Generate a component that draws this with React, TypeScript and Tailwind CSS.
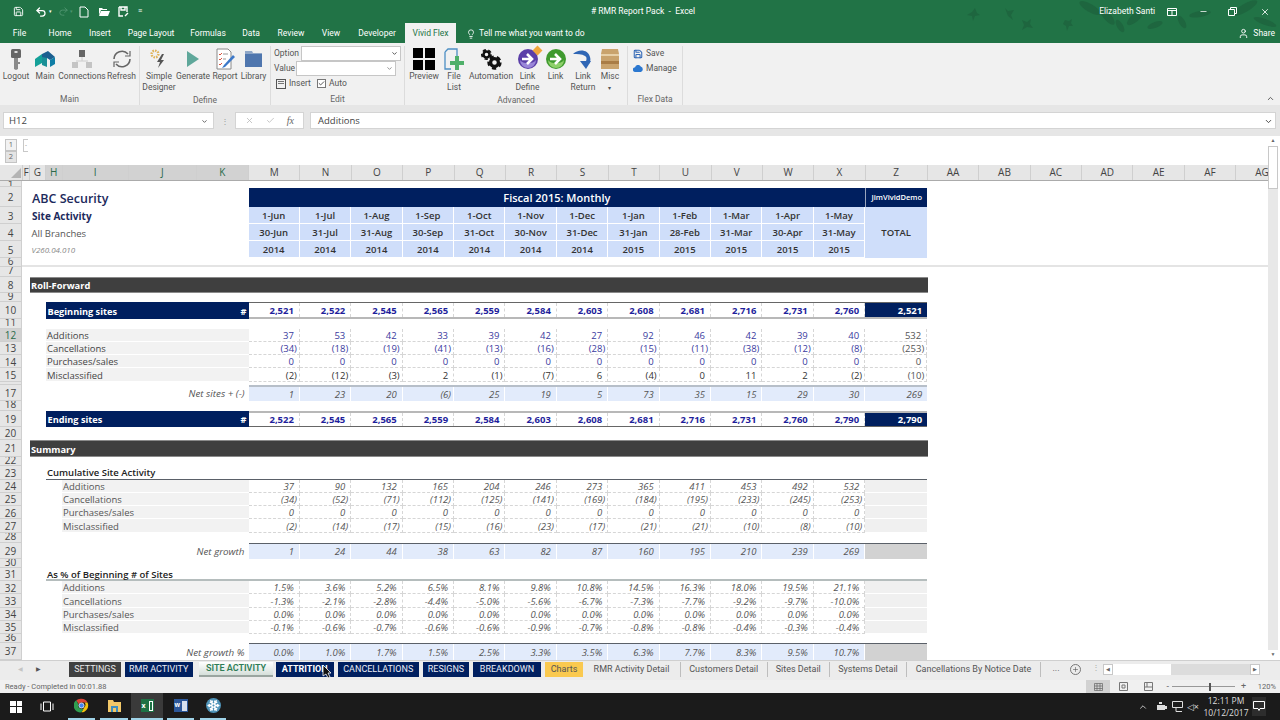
import { clsx } from "clsx"
import type { ReactNode } from "react"
import {
  ChevronDown,
  ChevronUp,
  Lightbulb,
  Minus,
  Plus,
  Redo2,
  Save,
  Snowflake,
  Undo2,
  User,
  X,
  Check,
} from "lucide-react"

const start = ["1-Jun", "1-Jul", "1-Aug", "1-Sep", "1-Oct", "1-Nov", "1-Dec", "1-Jan", "1-Feb", "1-Mar", "1-Apr", "1-May"]
const end = ["30-Jun", "31-Jul", "31-Aug", "30-Sep", "31-Oct", "30-Nov", "31-Dec", "31-Jan", "28-Feb", "31-Mar", "30-Apr", "31-May"]
const years = ["2014", "2014", "2014", "2014", "2014", "2014", "2014", "2015", "2015", "2015", "2015", "2015"]
const zeros = Array(12).fill("0")
const zeroPct = Array(12).fill("0.0%")
const colLetters = ["M", "N", "O", "P", "Q", "R", "S", "T", "U", "V", "W", "X"]

function GroupLabel({ children }: { children: ReactNode }) {
  return <div className="h-[13px] pt-[1px] text-center text-[8.5px] leading-[13px] text-[#666]">{children}</div>
}

function Btn({ w, icon, label }: { w: string; icon: ReactNode; label: ReactNode }) {
  return (
    <div className={clsx("flex shrink-0 flex-col items-center", w)}>
      <div className="flex h-[25px] items-center justify-center">{icon}</div>
      <div className="whitespace-nowrap text-center text-[8.5px] leading-[11px] text-[#555]">{label}</div>
    </div>
  )
}

function Sphere({ from, to }: { from: string; to: string }) {
  return (
    <svg width="22" height="22" viewBox="0 0 22 22">
      <circle cx="11" cy="11" r="10" fill={from} />
      <path d="M3 12a8 8 0 0 0 16 0a9 6 0 0 1-16 0z" fill={to} />
      <path d="M5 11h8M10 6l5 5-5 5" fill="none" stroke="#fff" strokeWidth="2.6" />
    </svg>
  )
}

function Gear({ cx, cy, r }: { cx: number; cy: number; r: number }) {
  return (
    <g fill="none" stroke="#111">
      <circle cx={cx} cy={cy} r={r * 0.6} strokeWidth={r * 0.5} />
      <circle cx={cx} cy={cy} r={r * 0.92} strokeWidth={r * 0.36} strokeDasharray={`${r * 0.65} ${r * 0.5}`} />
    </g>
  )
}

function Ribbon() {
  return (
    <div className="flex h-[62px] shrink-0 bg-[#f1f1f1] pt-[3px] font-['Roboto',sans-serif]">
      <div className="flex w-[140px] flex-col border-r border-[#dcdcdc]">
        <div className="flex flex-1 pl-[1px]">
          <Btn
            w="w-[30px]"
            label="Logout"
            icon={
              <svg width="14" height="22" viewBox="0 0 14 22">
                <rect x="2" y="1" width="10" height="9" rx="1.5" fill="#666" />
                <rect x="5.5" y="3" width="3" height="2" fill="#ddd" />
                <path d="M5 10h4v11l-2 1-2-1z" fill="#8a8a8a" />
                <path d="M9 14h2v2H9z" fill="#8a8a8a" />
              </svg>
            }
          />
          <Btn
            w="w-[28px]"
            label="Main"
            icon={
              <svg width="22" height="18" viewBox="0 0 22 18">
                <path d="M1 9l7-5v9l-7 4z" fill="#14a098" />
                <path d="M8 4l6-3 7 6-5 3-3-2-5 3z" fill="#1b5f8f" />
                <path d="M8 7l5 1v9l-5-2z" fill="#1a8f96" />
                <path d="M16 10l5-3v7l-5 3z" fill="#0f7ea6" />
              </svg>
            }
          />
          <Btn
            w="w-[46px]"
            label="Connections"
            icon={
              <svg width="22" height="20" viewBox="0 0 22 20">
                <rect x="8" y="1" width="6" height="7" fill="#666" />
                <path d="M11 8v4M5 12h12" stroke="#ccc" />
                <rect x="1" y="13" width="6" height="6" fill="#c4c4c4" />
                <rect x="15" y="13" width="6" height="6" fill="#c4c4c4" />
              </svg>
            }
          />
          <Btn
            w="w-[33px]"
            label="Refresh"
            icon={
              <svg width="22" height="20" viewBox="0 0 22 20" fill="none" stroke="#666" strokeWidth="1.6">
                <path d="M3 10a8 8 0 0 1 14-5" />
                <path d="M19 10a8 8 0 0 1-14 5" />
                <path d="M19 2v5h-5M3 18v-5h5" strokeWidth="1.2" />
              </svg>
            }
          />
        </div>
        <GroupLabel>Main</GroupLabel>
      </div>
      <div className="flex w-[131px] flex-col border-r border-[#dcdcdc]">
        <div className="flex flex-1 pl-[2px]">
          <Btn
            w="w-[34px]"
            label={
              <>
                Simple
                <br />
                Designer
              </>
            }
            icon={
              <svg width="20" height="20" viewBox="0 0 20 20">
                <circle cx="6" cy="5" r="3.4" fill="none" stroke="#e0b45c" strokeWidth="2.4" strokeDasharray="1.6 1" />
                <path d="M13 5l-5 8h3l-2 6 6-8h-3l3-6z" fill="#555" />
              </svg>
            }
          />
          <Btn
            w="w-[34px]"
            label="Generate"
            icon={
              <svg width="14" height="18" viewBox="0 0 14 18">
                <path d="M1 1l12 8-12 8z" fill="#5fa79a" />
              </svg>
            }
          />
          <Btn
            w="w-[30px]"
            label="Report"
            icon={
              <svg width="20" height="22" viewBox="0 0 20 22">
                <path d="M2 1h11l3 3v17H2z" fill="#fff" stroke="#8a8a8a" />
                <path d="M4 6l1 1 2-2M4 11l1 1 2-2M4 16l1 1 2-2" fill="none" stroke="#d9533f" />
                <path d="M8 6h5M8 11h3" stroke="#999" />
                <path d="M18 7l-9 10-2 3 3-1 10-10z" fill="#3c78c8" />
              </svg>
            }
          />
          <Btn
            w="w-[27px]"
            label="Library"
            icon={
              <svg width="19" height="18" viewBox="0 0 19 18">
                <path d="M1 1h7l1 2h9v14H1z" fill="#8fa7c8" />
                <rect x="1" y="4" width="17" height="13" fill="#4f76ae" />
              </svg>
            }
          />
        </div>
        <GroupLabel>Define</GroupLabel>
      </div>
      <div className="flex w-[134px] flex-col border-r border-[#dcdcdc]">
        <div className="flex-1 pl-[3px] text-[8.5px] text-[#555]">
          <div className="flex h-[15px] items-center">
            <span className="w-[27px]">Option</span>
            <div className="flex h-[15px] w-[100px] items-center justify-end border border-[#c6c6c6] bg-white pr-[2px]">
              <ChevronDown className="size-[7px] text-[#444]" strokeWidth={3} />
            </div>
          </div>
          <div className="flex h-[15px] items-center">
            <span className="w-[22px]">Value</span>
            <div className="flex h-[15px] w-[100px] items-center justify-end border border-[#c6c6c6] bg-white pr-[2px]">
              <ChevronDown className="size-[7px] text-[#888]" strokeWidth={3} />
            </div>
          </div>
          <div className="flex h-[15px] items-center pl-[2px]">
            <div className="flex size-[10px] flex-col gap-[1px] border border-[#555] p-[1px]">
              <div className="h-[1px] bg-[#777]" />
              <div className="h-[1px] bg-[#777]" />
            </div>
            <span className="ml-[3px] w-[28px]">Insert</span>
            <div className="flex size-[9px] items-center justify-center border border-[#777] bg-white">
              <Check className="size-[7px] text-[#444]" strokeWidth={3} />
            </div>
            <span className="ml-[3px]">Auto</span>
          </div>
        </div>
        <GroupLabel>Edit</GroupLabel>
      </div>
      <div className="flex w-[223px] flex-col border-r border-[#dcdcdc]">
        <div className="flex flex-1 pl-[4px]">
          <Btn
            w="w-[30px]"
            label="Preview"
            icon={
              <div className="grid grid-cols-2 gap-[2px]">
                <div className="size-[10px] bg-black" />
                <div className="size-[10px] bg-black" />
                <div className="size-[10px] bg-black" />
                <div className="size-[10px] bg-black" />
              </div>
            }
          />
          <Btn
            w="w-[30px]"
            label={
              <>
                File
                <br />
                List
              </>
            }
            icon={
              <svg width="22" height="22" viewBox="0 0 22 22">
                <path d="M2 4l3-3h9v8M8 21H2V4" fill="none" stroke="#4d8fc4" strokeWidth="1.3" />
                <path d="M12 8h4v5h5v4h-5v5h-4v-5H7v-4h5z" fill="#4fb06a" />
              </svg>
            }
          />
          <Btn
            w="w-[44px]"
            label="Automation"
            icon={
              <svg width="22" height="22" viewBox="0 0 22 22">
                <Gear cx={6.5} cy={6.5} r={5} />
                <Gear cx={14.5} cy={14.5} r={6.5} />
              </svg>
            }
          />
          <Btn
            w="w-[29px]"
            label={
              <>
                Link
                <br />
                Define
              </>
            }
            icon={
              <div className="relative">
                <Sphere from="#5b3fa8" to="#9a87d8" />
                <div className="absolute -right-[2px] -top-[1px] size-[7px] rotate-45 bg-[#f0a63c]" />
              </div>
            }
          />
          <Btn w="w-[27px]" label="Link" icon={<Sphere from="#3f9a2f" to="#8ed06a" />} />
          <Btn
            w="w-[28px]"
            label={
              <>
                Link
                <br />
                Return
              </>
            }
            icon={
              <svg width="22" height="22" viewBox="0 0 22 22">
                <path d="M1 6c5-5 15-5 17 3 1 3 0 5-1 7l-4-1c2-3 2-6 0-7-3-2-8-2-12-2z" fill="#2f66b5" />
                <path d="M8 13h11l-5 8z" fill="#2f66b5" />
              </svg>
            }
          />
          <Btn
            w="w-[26px]"
            label={
              <>
                Misc
                <br />
                <span className="text-[6px]">▾</span>
              </>
            }
            icon={
              <svg width="20" height="22" viewBox="0 0 20 22">
                <path d="M2 1h16l1 5v15H1V6z" fill="#c9a36d" />
                <rect x="1" y="6" width="18" height="2" fill="#e7d0a8" />
                <rect x="1" y="13" width="18" height="3" fill="#a97c45" />
              </svg>
            }
          />
        </div>
        <GroupLabel>Advanced</GroupLabel>
      </div>
      <div className="flex w-[55px] flex-col border-r border-[#dcdcdc]">
        <div className="flex-1 pl-[5px] text-[8.5px] text-[#555]">
          <div className="flex h-[15px] items-center gap-[3px]">
            <Save className="size-[10px] text-[#2f66b5]" strokeWidth={2.5} />
            <span>Save</span>
          </div>
          <div className="flex h-[15px] items-center gap-[3px]">
            <svg width="10" height="7" viewBox="0 0 10 7">
              <path d="M2.5 7a2.4 2.4 0 0 1-.4-4.8 3 3 0 0 1 5.6-.6A2.8 2.8 0 0 1 7.8 7z" fill="#2b78d0" />
            </svg>
            <span>Manage</span>
          </div>
        </div>
        <GroupLabel>Flex Data</GroupLabel>
      </div>
      <div className="flex flex-1 items-end justify-end pb-[2px] pr-[5px]">
        <ChevronUp className="size-[9px] text-[#555]" strokeWidth={2.5} />
      </div>
    </div>
  )
}

function TitleBar() {
  const tabs = [
    { t: "File", w: "w-[39px]" },
    { t: "Home", w: "w-[42px]" },
    { t: "Insert", w: "w-[38px]" },
    { t: "Page Layout", w: "w-[64px]" },
    { t: "Formulas", w: "w-[50px]" },
    { t: "Data", w: "w-[36px]" },
    { t: "Review", w: "w-[44px]" },
    { t: "View", w: "w-[36px]" },
    { t: "Developer", w: "w-[56px]" },
  ]
  return (
    <div className="relative h-[43px] shrink-0 bg-[#217346] font-['Roboto',sans-serif] text-white">
      <svg className="absolute right-0 top-0" width="320" height="43" viewBox="0 0 320 43" fill="#1e663f">
        <path d="M7 15l5-3 3-4 2 5 3 2-5 1-2 5-1-5z" />
        <path d="M45 8l3 3 6-1-3 5 2 5-5-4-3-8zM62 20l5 2 4-3-1 5 3 4-6-1-5 3 2-5z" />
        <path d="M105 20l4 1 3-2-1 4 2 3-4 0-2 5-1-5-3-2z" />
        <ellipse cx="130" cy="8" rx="12" ry="4" transform="rotate(30 130 8)" />
        <ellipse cx="147" cy="16" rx="11" ry="4" transform="rotate(50 147 16)" />
        <ellipse cx="175" cy="18" rx="10" ry="4" transform="rotate(-40 175 18)" />
        <ellipse cx="195" cy="25" rx="8" ry="3" transform="rotate(-20 195 25)" />
        <ellipse cx="160" cy="26" rx="7" ry="3" transform="rotate(60 160 26)" />
        <ellipse cx="240" cy="14" rx="11" ry="3" transform="rotate(-10 240 14)" />
        <ellipse cx="285" cy="8" rx="14" ry="4" transform="rotate(-30 285 8)" />
        <ellipse cx="305" cy="22" rx="12" ry="3" transform="rotate(20 305 22)" />
        <ellipse cx="222" cy="22" rx="7" ry="3" transform="rotate(60 222 22)" />
      </svg>
      <div className="relative flex h-[21px] items-center pt-[2px]">
        <div className="flex w-[591px] items-center pl-[13px]">
          <Save className="size-[11px]" />
          <Undo2 className="ml-[11px] size-[12px]" strokeWidth={2.5} />
          <span className="ml-[2px] text-[5px]">▾</span>
          <Redo2 className="ml-[6px] size-[11px] text-[#4f9570]" />
          <span className="ml-[1px] text-[5px] text-[#4f9570]">▾</span>
          <svg className="ml-[6px]" width="10" height="12" viewBox="0 0 10 12" fill="none" stroke="#fff">
            <path d="M1 1h5l3 3v7H1z" />
          </svg>
          <svg className="ml-[9px]" width="12" height="11" viewBox="0 0 12 11" fill="#fff">
            <path d="M1 2h3l1 1h4v1H3L1 9zM3 5h9l-2 5H1z" />
          </svg>
          <svg className="ml-[8px]" width="11" height="11" viewBox="0 0 11 11" fill="none" stroke="#fff">
            <path d="M1 1h8v5M1 1v9h4M3 1v3h4V1M7 10l3-3" strokeWidth="1.4" />
          </svg>
          <span className="ml-[9px] text-[7px] leading-none">≡</span>
        </div>
        <span className="whitespace-nowrap text-[8.5px]"># RMR Report Pack&nbsp; -&nbsp; Excel</span>
        <div className="flex flex-1 items-center justify-end">
          <span className="mr-[12px] whitespace-nowrap text-[8.5px]">Elizabeth Santi</span>
          <svg width="10" height="8" viewBox="0 0 10 8" fill="none" stroke="#fff">
            <path d="M.5.5h9v7h-9zM.5 2.5h9M5 3v4" />
          </svg>
          <Minus className="ml-[22px] size-[9px]" />
          <svg className="ml-[20px]" width="9" height="9" viewBox="0 0 9 9" fill="none" stroke="#fff">
            <path d="M.5 2.5h6v6h-6zM2.5 2.5v-2h6v6h-2" />
          </svg>
          <X className="ml-[23px] mr-[10px] size-[10px]" />
        </div>
      </div>
      <div className="relative flex h-[22px] items-center pt-[3px] text-[8.5px]">
        {tabs.map((tab) => (
          <div key={tab.t} className={clsx("text-center", tab.w)}>
            {tab.t}
          </div>
        ))}
        <div className="flex h-[20px] w-[51px] items-center justify-center self-end bg-[#f1f1f1] text-[#217346]">Vivid Flex</div>
        <Lightbulb className="ml-[10px] size-[10px]" />
        <span className="ml-[3px]">Tell me what you want to do</span>
        <div className="flex flex-1 items-center justify-end gap-[4px] pr-[5px]">
          <User className="size-[11px]" />
          <span>Share</span>
        </div>
      </div>
    </div>
  )
}

function FormulaBar() {
  return (
    <div className="flex h-[31px] shrink-0 items-start bg-[#e6e6e6] pt-[7px] text-[9.5px] text-[#444]">
      <div className="ml-[3px] flex h-[17px] w-[211px] items-center justify-between border border-[#d4d4d4] bg-white px-[5px] pt-[1px]">
        <span>H12</span>
        <ChevronDown className="size-[7px] text-[#555]" strokeWidth={3} />
      </div>
      <span className="flex h-[17px] w-[21px] items-center justify-center text-[8px] text-[#999]">⋮</span>
      <div className="flex h-[17px] w-[69px] items-center justify-around border border-[#d4d4d4] bg-white px-[3px] text-[#b5b5b5]">
        <X className="size-[9px]" />
        <Check className="size-[9px]" />
        <span className="font-['Liberation_Serif',serif] text-[10px] italic text-[#666]">fx</span>
      </div>
      <div className="ml-[6px] flex h-[17px] flex-1 items-center justify-between border border-[#d4d4d4] bg-white pl-[7px] pr-[2px] pt-[1px]">
        <span>Additions</span>
        <ChevronDown className="size-[9px] text-[#444]" strokeWidth={2.5} />
      </div>
      <div className="w-[4px]" />
    </div>
  )
}

function OutlineStrip() {
  return (
    <div className="flex h-[29px] shrink-0 bg-white pl-[5px] pt-[3px] text-[#666]">
      <div className="flex w-[18px] flex-col text-[7.5px]">
        <div className="flex h-[12px] w-[12px] items-center justify-center border border-[#c4c4c4] bg-[#f2f2f2]">1</div>
        <div className="flex h-[12px] w-[12px] items-center justify-center border border-[#c4c4c4] bg-[#e4e4e4]">2</div>
      </div>
      <div className="flex h-[13px] w-[5px] items-center justify-center border-y border-l border-[#c8c8c8] text-[6px]">-</div>
    </div>
  )
}

function ColHeaders() {
  const cols = [
    { t: "F", w: "w-[7px]" },
    { t: "G", w: "w-[16px]" },
    { t: "H", w: "w-[16.5px]", on: true },
    { t: "I", w: "w-[66.5px]", on: true },
    { t: "J", w: "w-[67.5px]", on: true },
    { t: "K", w: "w-[52.5px]", on: true },
  ]
  const right = [
    { t: "AA", w: "w-[51.6px]" },
    { t: "AB", w: "w-[51.4px]" },
    { t: "AC", w: "w-[51.4px]" },
    { t: "AD", w: "w-[51.4px]" },
    { t: "AE", w: "w-[51.4px]" },
    { t: "AF", w: "w-[51.4px]" },
  ]
  const plain = "flex shrink-0 items-center justify-center border-r border-[#cfcfcf]"
  return (
    <div className="flex h-[16px] shrink-0 border-b border-[#ababab] bg-[#e6e6e6] text-[10px] text-[#444]">
      <div className="flex w-[23px] shrink-0 items-end justify-end border-r border-[#cfcfcf] pb-[2px] pr-[1px]">
        <svg width="10" height="10" viewBox="0 0 10 10">
          <path d="M10 0v10H0z" fill="#b4b4b4" />
        </svg>
      </div>
      {cols.map((c) => (
        <div key={c.t} className={clsx(plain, c.w, c.on && "bg-[#d2d2d2] text-[#2a6b4a]")}>
          {c.t}
        </div>
      ))}
      {colLetters.map((c) => (
        <div key={c} className={clsx(plain, "w-[51.4px]")}>
          {c}
        </div>
      ))}
      <div className={clsx(plain, "w-[62px]")}>Z</div>
      {right.map((c) => (
        <div key={c.t} className={clsx(plain, c.w)}>
          {c.t}
        </div>
      ))}
      <div className="flex flex-1 items-center overflow-hidden pl-[19px]">AG</div>
    </div>
  )
}

function Row({ n, h, tiny, on, children }: { n?: number; h: string; tiny?: boolean; on?: boolean; children?: ReactNode }) {
  return (
    <div className={clsx("flex shrink-0", h)}>
      <div
        className={clsx(
          "flex w-[22px] shrink-0 justify-center overflow-hidden border-b border-r border-[#cfcfcf] text-[10px] leading-[13px]",
          tiny ? "items-start" : "items-center pt-[2px]",
          on ? "bg-[#d2d2d2] text-[#2a6b4a]" : "bg-[#e6e6e6] text-[#444]",
        )}
      >
        <span className={clsx(tiny && "-mt-[3px]")}>{n}</span>
      </div>
      <div className="flex min-w-0 flex-1">{children}</div>
    </div>
  )
}

function valPad(v: string) {
  if (v.endsWith(")")) return "pr-[2px]"
  return "pr-[5px]"
}

function Months({
  vals,
  total,
  wrap,
  cell,
  totalCell,
}: {
  vals: string[]
  total?: string
  wrap?: string
  cell?: string
  totalCell?: string
}) {
  return (
    <div className={clsx("flex w-[678.8px] shrink-0 leading-none", wrap)}>
      {vals.map((v, i) => (
        <div key={i} className={clsx("flex w-[51.4px] shrink-0 items-center justify-end", valPad(v), cell)}>
          {v}
        </div>
      ))}
      <div className={clsx("flex w-[62px] shrink-0 items-center justify-end", valPad(total ?? ""), totalCell)}>{total}</div>
    </div>
  )
}

const dashed = "border-r border-b border-dashed border-[#d6d6d6]"

function LineRow({ n, h, on, label, vals, total, blue }: { n: number; h: string; on?: boolean; label: string; vals: string[]; total: string; blue?: boolean }) {
  return (
    <Row n={n} h={h} on={on}>
      <div className="ml-[23.5px] flex w-[203px] shrink-0 items-center border-b border-white bg-[#f2f2f2] pl-[1.5px] pt-[2px] text-[9.5px] leading-none text-[#444]">{label}</div>
      <Months
        vals={vals}
        total={total}
        wrap="text-[9.5px]"
        cell={clsx(dashed, "pt-[2px]", blue ? "text-[#3a3a9e]" : "text-[#333]")}
        totalCell={clsx(dashed, "pt-[2px] text-[#555]")}
      />
    </Row>
  )
}

function SummaryRow({ n, label, vals }: { n: number; label: string; vals: string[] }) {
  return (
    <Row n={n} h="h-[13.25px]">
      <div className="ml-[40px] flex w-[186.5px] shrink-0 items-center border-b border-white bg-[#f2f2f2] pl-[1px] pt-[2px] text-[9.5px] leading-none text-[#555]">{label}</div>
      <Months vals={vals} wrap="text-[9.5px] italic text-[#555]" cell={clsx(dashed, "pt-[2px]")} totalCell="bg-[#f0f0f0] border-b border-white" />
    </Row>
  )
}

function NetRow({ n, h, label, vals, total, wrap, totalCell }: { n: number; h: string; label: string; vals: string[]; total?: string; wrap: string; totalCell: string }) {
  return (
    <Row n={n} h={h}>
      <div className="flex w-[226.5px] shrink-0 items-center justify-end pr-[4px] pt-[3px] text-[9.8px] italic leading-none text-[#555]">{label}</div>
      <Months vals={vals} total={total} wrap={clsx("text-[9.5px] italic text-[#555]", wrap)} cell="bg-[#e2ebfb] border-r border-white pt-[2px]" totalCell={totalCell} />
    </Row>
  )
}

function BandRow({ n, h, label }: { n: number; h: string; label: string }) {
  return (
    <Row n={n} h={h}>
      <div className="ml-[8px] flex w-[897.5px] items-center border-y border-[#8a8a8a] bg-[#3f3f3f] pl-[1px] pt-[3px] text-[9.3px] font-bold leading-none text-white">{label}</div>
    </Row>
  )
}

function SitesRow({ n, h, label, vals, total, wrap }: { n: number; h: string; label: string; vals: string[]; total: string; wrap: string }) {
  return (
    <Row n={n} h={h}>
      <div className="ml-[23.5px] flex w-[203px] shrink-0 items-center justify-between bg-[#001f5f] px-[2px] pt-[3px] text-[9.2px] font-bold leading-none text-white">
        <span>{label}</span>
        <span>#</span>
      </div>
      <Months
        vals={vals}
        total={total}
        wrap={clsx("text-[9.5px] font-bold text-[#1f1f9c]", wrap)}
        cell="border-r border-dashed border-[#d6d6d6] pt-[2px]"
        totalCell="bg-[#001f5f] text-white pt-[2px]"
      />
    </Row>
  )
}

function HeaderCells({ n, vals, total }: { n: number; vals: string[]; total?: string }) {
  return (
    <div className="flex w-[678.8px] shrink-0 text-[9.5px] font-semibold leading-none text-[#333]">
      {vals.map((v, i) => (
        <div key={n + "-" + i} className="flex w-[51.4px] shrink-0 items-center justify-center border-b border-r border-white bg-[#cfdefa] pt-[2px]">
          {v}
        </div>
      ))}
      <div className="flex w-[62px] shrink-0 items-center justify-center bg-[#cfdefa] pt-[1px]">{total}</div>
    </div>
  )
}

function Sheet() {
  return (
    <div className="flex min-h-0 min-w-0 flex-1 flex-col overflow-hidden bg-white">
      <ColHeaders />
      <Row n={1} h="h-[6px]" tiny />
      <Row n={2} h="h-[20px]">
        <div className="flex w-[226.5px] shrink-0 items-center pl-[10px] pt-[4px] text-[12.5px] font-semibold leading-none text-[#1c2a5c]">ABC Security</div>
        <div className="mt-[1px] flex w-[616.8px] shrink-0 items-center justify-center bg-[#001f5f] text-[11px] font-semibold leading-none text-white">Fiscal 2015: Monthly</div>
        <div className="mt-[1px] flex w-[62px] shrink-0 items-center justify-center border-l border-[#9aa5bd] bg-[#001f5f] text-[7.5px] font-semibold leading-none text-white">JimVividDemo</div>
      </Row>
      <Row n={3} h="h-[17px]">
        <div className="flex w-[226.5px] shrink-0 items-center pl-[10px] text-[10px] font-bold leading-none text-[#1c2a5c]">Site Activity</div>
        <HeaderCells n={3} vals={start} />
      </Row>
      <Row n={4} h="h-[17px]">
        <div className="flex w-[226.5px] shrink-0 items-center pl-[9.5px] pt-[2px] text-[9.5px] leading-none text-[#555]">All Branches</div>
        <HeaderCells n={4} vals={end} total="TOTAL" />
      </Row>
      <Row n={5} h="h-[17px]">
        <div className="flex w-[226.5px] shrink-0 items-center pl-[9.5px] text-[8px] italic leading-none text-[#888]">V260.04.010</div>
        <HeaderCells n={5} vals={years} />
      </Row>
      <Row n={6} h="h-[8.5px]" tiny>
        <div className="flex-1 border-b-2 border-[#e4e4e4]" />
      </Row>
      <Row n={7} h="h-[10px]" tiny />
      <BandRow n={8} h="h-[16px]" label="Roll-Forward" />
      <Row n={9} h="h-[9px]" tiny />
      <SitesRow
        n={10}
        h="h-[17px]"
        label="Beginning sites"
        vals={["2,521", "2,522", "2,545", "2,565", "2,559", "2,584", "2,603", "2,608", "2,681", "2,716", "2,731", "2,760"]}
        total="2,521"
        wrap="border-t border-[#666] border-b-2 border-b-[#b8b8b8]"
      />
      <Row n={11} h="h-[10px]" tiny />
      <LineRow n={12} h="h-[13.25px]" on label="Additions" blue vals={["37", "53", "42", "33", "39", "42", "27", "92", "46", "42", "39", "40"]} total="532" />
      <LineRow n={13} h="h-[13.25px]" label="Cancellations" blue vals={["(34)", "(18)", "(19)", "(41)", "(13)", "(16)", "(28)", "(15)", "(11)", "(38)", "(12)", "(8)"]} total="(253)" />
      <LineRow n={14} h="h-[13.25px]" label="Purchases/sales" blue vals={zeros} total="0" />
      <LineRow n={15} h="h-[13.25px]" label="Misclassified" vals={["(2)", "(12)", "(3)", "2", "(1)", "(7)", "6", "(4)", "0", "11", "2", "(2)"]} total="(10)" />
      <Row h="h-[3px]" tiny />
      <NetRow
        n={17}
        h="h-[16px]"
        label="Net sites + (-)"
        vals={["1", "23", "20", "(6)", "25", "19", "5", "73", "35", "15", "29", "30"]}
        total="269"
        wrap="border-t-2 border-[#b7bfc9]"
        totalCell="bg-[#e2ebfb] pt-[2px]"
      />
      <Row n={18} h="h-[10px]" tiny />
      <SitesRow
        n={19}
        h="h-[16px]"
        label="Ending sites"
        vals={["2,522", "2,545", "2,565", "2,559", "2,584", "2,603", "2,608", "2,681", "2,716", "2,731", "2,760", "2,790"]}
        total="2,790"
        wrap="border-t-2 border-[#b8b8b8] border-b border-b-[#666]"
      />
      <Row n={20} h="h-[13.5px]" />
      <BandRow n={21} h="h-[16.5px]" label="Summary" />
      <Row n={22} h="h-[9px]" tiny />
      <Row n={23} h="h-[14px]">
        <div className="ml-[23.5px] flex w-[881.5px] items-center border-b border-[#5a6068] pl-[1.5px] pt-[2px] text-[9.5px] font-semibold leading-none text-[#222]">Cumulative Site Activity</div>
      </Row>
      <SummaryRow n={24} label="Additions" vals={["37", "90", "132", "165", "204", "246", "273", "365", "411", "453", "492", "532"]} />
      <SummaryRow n={25} label="Cancellations" vals={["(34)", "(52)", "(71)", "(112)", "(125)", "(141)", "(169)", "(184)", "(195)", "(233)", "(245)", "(253)"]} />
      <SummaryRow n={26} label="Purchases/sales" vals={zeros} />
      <SummaryRow n={27} label="Misclassified" vals={["(2)", "(14)", "(17)", "(15)", "(16)", "(23)", "(17)", "(21)", "(21)", "(10)", "(8)", "(10)"]} />
      <Row n={28} h="h-[10px]" tiny />
      <NetRow
        n={29}
        h="h-[16px]"
        label="Net growth"
        vals={["1", "24", "44", "38", "63", "82", "87", "160", "195", "210", "239", "269"]}
        wrap="border-t border-[#5a6068]"
        totalCell="bg-[#d2d2d2]"
      />
      <Row n={30} h="h-[9px]" tiny />
      <Row n={31} h="h-[13.5px]">
        <div className="ml-[23.5px] flex w-[881.5px] items-center border-b-2 border-[#b5bdbd] pl-[1.5px] pt-[2px] text-[9.5px] font-semibold leading-none text-[#222]">As % of Beginning # of Sites</div>
      </Row>
      <SummaryRow n={32} label="Additions" vals={["1.5%", "3.6%", "5.2%", "6.5%", "8.1%", "9.8%", "10.8%", "14.5%", "16.3%", "18.0%", "19.5%", "21.1%"]} />
      <SummaryRow n={33} label="Cancellations" vals={["-1.3%", "-2.1%", "-2.8%", "-4.4%", "-5.0%", "-5.6%", "-6.7%", "-7.3%", "-7.7%", "-9.2%", "-9.7%", "-10.0%"]} />
      <SummaryRow n={34} label="Purchases/sales" vals={zeroPct} />
      <SummaryRow n={35} label="Misclassified" vals={["-0.1%", "-0.6%", "-0.7%", "-0.6%", "-0.6%", "-0.9%", "-0.7%", "-0.8%", "-0.8%", "-0.4%", "-0.3%", "-0.4%"]} />
      <Row n={36} h="h-[8.5px]" tiny />
      <NetRow
        n={37}
        h="h-[17px]"
        label="Net growth %"
        vals={["0.0%", "1.0%", "1.7%", "1.5%", "2.5%", "3.3%", "3.5%", "6.3%", "7.7%", "8.3%", "9.5%", "10.7%"]}
        wrap="border-t border-[#5a6068]"
        totalCell="bg-[#d2d2d2]"
      />
    </div>
  )
}

function SheetArea() {
  return (
    <div className="flex min-h-0 flex-1">
      <div className="flex min-w-0 flex-1 flex-col">
        <OutlineStrip />
        <Sheet />
      </div>
      <div className="flex w-[12px] shrink-0 flex-col bg-white pr-[2px]">
        <div className="flex flex-1 flex-col bg-[#e8e8e8]">
          <div className="flex h-[10px] items-center justify-center bg-white text-[5px] text-[#666]">▲</div>
          <div className="h-[43px] border border-[#c8c8c8] bg-white" />
          <div className="flex-1" />
          <div className="flex h-[10px] items-center justify-center bg-white text-[5px] text-[#666]">▼</div>
        </div>
      </div>
    </div>
  )
}

function SheetTabs() {
  const colored = [
    { t: "SETTINGS", c: "ml-[28px] w-[52px] bg-[#404040] text-[#e8e8e8]" },
    { t: "RMR ACTIVITY", c: "ml-[3.5px] w-[68.5px] bg-[#001f5f] text-[#e8ecf5]" },
    { t: "SITE ACTIVITY", c: "ml-[6px] w-[74px] bg-gradient-to-b from-white to-[#d5dfda] font-semibold text-[#2f7d57] border-b-2 border-[#9aa5a0]" },
    { t: "ATTRITION", c: "ml-[2.5px] w-[58.5px] bg-[#001f5f] font-bold text-white" },
    { t: "CANCELLATIONS", c: "ml-[3.5px] w-[81.5px] bg-[#001f5f] text-[#e8ecf5]" },
    { t: "RESIGNS", c: "ml-[4px] w-[46px] bg-[#001f5f] text-[#e8ecf5]" },
    { t: "BREAKDOWN", c: "ml-[4px] w-[68px] bg-[#001f5f] text-[#e8ecf5]" },
    { t: "Charts", c: "ml-[4px] w-[38px] bg-[#fac94f] text-[#555]" },
  ]
  const plain = [
    { t: "RMR Activity Detail", w: "w-[98px]" },
    { t: "Customers Detail", w: "w-[86.5px]" },
    { t: "Sites Detail", w: "w-[62.5px]" },
    { t: "Systems Detail", w: "w-[77px]" },
    { t: "Cancellations By Notice Date", w: "w-[134px]" },
  ]
  return (
    <div className="flex h-[20px] shrink-0 items-start border-t border-[#cfcfcf] bg-[#ececec] pt-[1px] font-['Roboto',sans-serif] text-[9px]">
      <span className="ml-[18px] mt-[2px] text-[6px] text-[#c4c4c4]">◀</span>
      <span className="ml-[13px] mt-[2px] text-[6px] text-[#555]">▶</span>
      {colored.map((tab) => (
        <div key={tab.t} className={clsx("flex h-[15px] shrink-0 items-center justify-center whitespace-nowrap", tab.c)}>
          {tab.t}
        </div>
      ))}
      {plain.map((tab) => (
        <div key={tab.t} className={clsx("flex h-[15px] shrink-0 items-center justify-center whitespace-nowrap border-r border-[#bdbdbd] text-[#555]", tab.w)}>
          {tab.t}
        </div>
      ))}
      <span className="ml-[9px] w-[12px] text-center text-[#555]">...</span>
      <div className="ml-[8px] mt-[2px] flex size-[11px] items-center justify-center rounded-full border border-[#777]">
        <Plus className="size-[7px] text-[#555]" />
      </div>
      <span className="ml-[10px] w-[10px] text-center text-[8px] text-[#aaa]">⋮</span>
      <div className="ml-[2px] mt-[2px] flex h-[11px] w-[157px] items-center bg-[#dcdcdc]">
        <div className="flex h-full w-[10px] items-center justify-center border border-[#c8c8c8] bg-white text-[5px] text-[#666]">◀</div>
        <div className="h-full w-[58px] bg-white" />
        <div className="flex-1" />
        <div className="flex h-full w-[10px] items-center justify-center border border-[#c8c8c8] bg-white text-[5px] text-[#666]">▶</div>
      </div>
    </div>
  )
}

function StatusBar() {
  return (
    <div className="flex h-[13px] shrink-0 items-center bg-[#f0f0f0] pl-[5px] font-['Roboto',sans-serif] text-[7.5px] text-[#666]">
      <span>Ready - Completed in 00:01.88</span>
      <div className="ml-auto flex h-full items-center">
        <div className="flex h-full w-[24px] items-center justify-center bg-[#d2d2d2]">
          <svg width="9" height="8" viewBox="0 0 9 8" fill="none" stroke="#666">
            <path d="M.5.5h8v7h-8zM3 .5v7M6 .5v7M.5 3h8M.5 5.5h8" strokeWidth=".7" />
          </svg>
        </div>
        <svg className="ml-[9px]" width="9" height="9" viewBox="0 0 9 9" fill="none" stroke="#777">
          <path d="M.5.5h8v8h-8zM3 3h3v3H3z" />
        </svg>
        <svg className="ml-[16px]" width="9" height="9" viewBox="0 0 9 9" fill="none" stroke="#777">
          <path d="M.5.5h8v8h-8zM.5 5h8M3 5V.5" />
        </svg>
        <span className="ml-[13px] text-[9px] leading-none">-</span>
        <div className="ml-[3px] flex h-[1px] w-[63px] items-center bg-[#999] pl-[37px]">
          <div className="h-[8px] w-[2px] shrink-0 bg-[#555]" />
        </div>
        <span className="ml-[6px] text-[9px] leading-none">+</span>
        <span className="ml-[11px] mr-[4px] w-[19px] text-right">120%</span>
      </div>
    </div>
  )
}

function TaskIcon({ on, children, w }: { on?: boolean; children: ReactNode; w: string }) {
  return (
    <div className={clsx("flex h-full shrink-0 items-center justify-center border-b-2 border-[#9fd3e8]", w, on && "bg-[#3a3a3a]")}>
      {children}
    </div>
  )
}

function Taskbar() {
  return (
    <div className="flex h-[27px] shrink-0 items-center bg-[#1b1b1b] text-white">
      <div className="flex w-[32px] justify-center">
        <div className="grid size-[12px] grid-cols-2 gap-[1px]">
          <div className="bg-white" />
          <div className="bg-white" />
          <div className="bg-white" />
          <div className="bg-white" />
        </div>
      </div>
      <div className="flex w-[30px] justify-center">
        <svg width="14" height="11" viewBox="0 0 14 11" fill="none" stroke="#fff">
          <path d="M3.5 1h7v9h-7zM1 2.5V9M13 2.5V9" />
        </svg>
      </div>
      <div className="ml-[6px] flex h-full items-center">
        <TaskIcon w="w-[27px]">
          <svg width="15" height="15" viewBox="0 0 20 20">
            <path d="M10 1a9 9 0 0 1 8 5h-8a4 4 0 0 0-4 2L3 3a9 9 0 0 1 7-2z" fill="#db4437" />
            <path d="M18 6a9 9 0 0 1-8 13l4-7a4 4 0 0 0 0-6z" fill="#f4c20d" />
            <path d="M3 3a9 9 0 0 0 7 16l4-7a4 4 0 0 1-8-3z" fill="#2f9e4f" />
            <circle cx="10" cy="10" r="3.4" fill="#4285f4" stroke="#fff" />
          </svg>
        </TaskIcon>
        <div className="w-[5px]" />
        <TaskIcon w="w-[28px]">
          <svg width="15" height="14" viewBox="0 0 15 14">
            <path d="M1 1h5l1 2h7v10H1z" fill="#f2c868" />
            <rect x="4" y="7" width="7" height="6" fill="#3f8fc0" />
            <rect x="6" y="9" width="3" height="4" fill="#f2c868" />
          </svg>
        </TaskIcon>
        <div className="w-[3px]" />
        <TaskIcon on w="w-[32px]">
          <div className="flex h-[13px] w-[13px] items-center justify-between bg-[#1e7145] px-[1px] text-[7px] font-bold leading-none">
            <span>x</span>
            <div className="h-[10px] w-[4px] border border-white" />
          </div>
        </TaskIcon>
        <div className="w-[4px]" />
        <TaskIcon w="w-[27px]">
          <div className="flex h-[13px] w-[14px] items-center justify-between bg-[#2b579a] px-[1px] text-[6.5px] font-bold leading-none">
            <span>w</span>
            <div className="h-[10px] w-[5px] bg-[#d7e0ef]" />
          </div>
        </TaskIcon>
        <div className="w-[6px]" />
        <TaskIcon w="w-[26px]">
          <div className="flex size-[15px] items-center justify-center rounded-full bg-[#4f93b8]">
            <Snowflake className="size-[13px] text-white" strokeWidth={2.5} />
          </div>
        </TaskIcon>
      </div>
      <div className="ml-auto flex items-center text-[#ddd]">
        <ChevronUp className="size-[10px]" />
        <svg className="ml-[8px]" width="11" height="9" viewBox="0 0 11 9" fill="#ddd">
          <path d="M1 3h8v5H1zM9 4h2v3H9zM3 0h3v2H3z" />
        </svg>
        <svg className="ml-[5px]" width="11" height="11" viewBox="0 0 11 11" fill="none" stroke="#ddd">
          <path d="M.5.5h10v6h-10zM4 6.5v4h6" />
        </svg>
        <span className="ml-[4px] text-[9px] leading-none">◁×</span>
        <div className="ml-[6px] flex w-[42px] flex-col items-center text-[8.5px] leading-[12px]">
          <span>12:11 PM</span>
          <span>10/12/2017</span>
        </div>
        <div className="ml-[5px] mr-[14px] flex h-[19px] w-[14px] items-center justify-center bg-[#2d2d2d]">
          <svg width="12" height="11" viewBox="0 0 12 11" fill="none" stroke="#fff">
            <path d="M.5.5h11v7H7l-1 2-1-2H.5z" />
          </svg>
        </div>
      </div>
    </div>
  )
}

export default function App() {
  return (
    <div className="relative flex h-[720px] w-[1280px] flex-col overflow-hidden bg-white font-['Open_Sans',sans-serif]">
      <TitleBar />
      <Ribbon />
      <FormulaBar />
      <SheetArea />
      <SheetTabs />
      <StatusBar />
      <Taskbar />
      <svg className="absolute left-[322px] top-[664px]" width="10" height="15" viewBox="0 0 10 15">
        <path d="M1 1v11l3-2 2 4 2-1-2-4h3z" fill="#111" stroke="#fff" strokeWidth=".8" />
      </svg>
    </div>
  )
}
